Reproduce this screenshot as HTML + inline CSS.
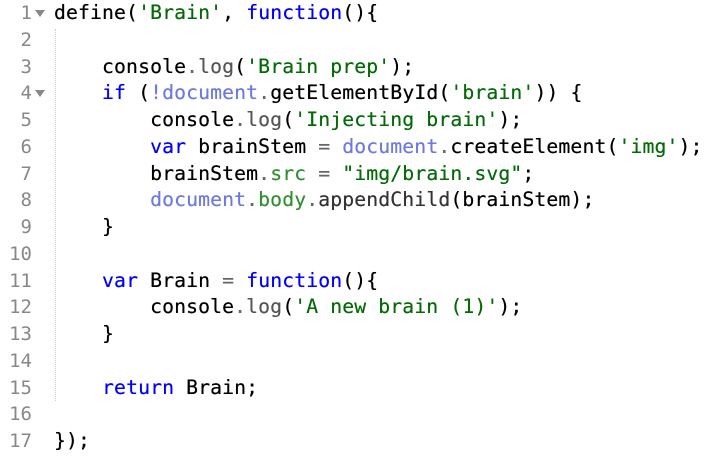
<!DOCTYPE html>
<html><head><style>
body{margin:0;width:706px;height:456px;background:#fff;overflow:hidden;position:relative;font-family:"DejaVu Sans Mono","Liberation Mono",monospace;}
.g{position:absolute;left:0;top:0px;width:32px;text-align:right;color:#888;font-size:19px;line-height:26.75px}
.c{position:absolute;left:54px;top:0px;font-size:19.8px;line-height:26.75px;white-space:pre;color:#000;letter-spacing:0.1px;text-shadow:0 0 0.4px currentColor}
.k{color:#0000ff}.s{color:#036a07}.d{color:#6d79de}.p{color:#666}.l{color:#555}.a{color:#318e31}.m{color:#333}
.ar{position:absolute;left:35px;width:0;height:0;border-left:5px solid transparent;border-right:5px solid transparent;border-top:7px solid #888}
.guide{position:absolute;left:55px;top:29px;height:372px;border-left:1px dotted #ccc}
</style></head><body>
<div class="guide"></div>
<div class="g">1<br>2<br>3<br>4<br>5<br>6<br>7<br>8<br>9<br>10<br>11<br>12<br>13<br>14<br>15<br>16<br>17</div>
<div class="ar" style="top:10px"></div>
<div class="ar" style="top:90px"></div>
<div class="c">define(<span class="s">'Brain'</span>, <span class="k">function</span>(){

    console<span class="p">.</span><span class="l">log</span>(<span class="s">'Brain prep'</span>);
    <span class="k">if</span> (<span class="d">!document</span><span class="p">.</span>getElementById(<span class="s">'brain'</span>)) {
        console<span class="p">.</span><span class="l">log</span>(<span class="s">'Injecting brain'</span>);
        <span class="k">var</span> brainStem <span class="p">=</span> <span class="d">document</span><span class="p">.</span>createElement(<span class="s">'img'</span>);
        brainStem<span class="p">.</span><span class="a">src</span> <span class="p">=</span> <span class="s">"img/brain.svg"</span>;
        <span class="d">document</span><span class="p">.</span><span class="a">body</span><span class="p">.</span><span class="m">appendChild</span>(brainStem);
    }

    <span class="k">var</span> Brain <span class="p">=</span> <span class="k">function</span>(){
        console<span class="p">.</span><span class="l">log</span>(<span class="s">'A new brain (1)'</span>);
    }

    <span class="k">return</span> Brain;

});</div>
</body></html>
